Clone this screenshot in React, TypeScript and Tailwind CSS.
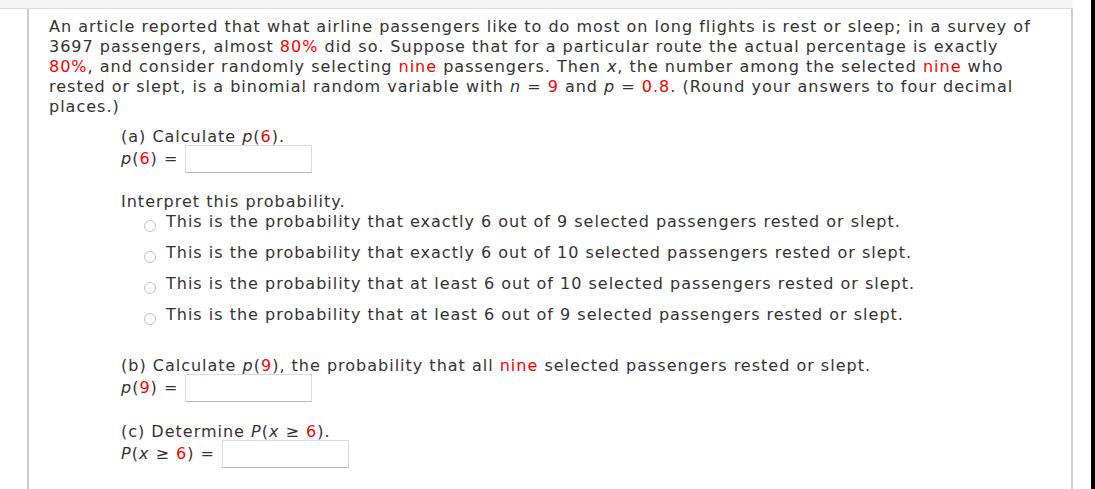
import React from 'react';

const Red: React.FC<{ children: React.ReactNode }> = ({ children }) => (
  <span className="text-[#ff0000]">{children}</span>
);

const V: React.FC<{ children: React.ReactNode }> = ({ children }) => <i>{children}</i>;

const AnswerBox: React.FC = () => (
  <input
    type="text"
    className="ml-[7px] h-[28px] w-[127px] border border-[#dcdcdc] border-b-[#b8b8b8] bg-white outline-none"
  />
);

const Radio: React.FC<{ label: string; first?: boolean }> = ({ label, first }) => (
  <label className={`flex items-center ${first ? '' : 'mt-[11px]'} leading-[20px]`}>
    <span className="mr-[10px] ml-[23px] mt-[8px] inline-block h-[12px] w-[12px] rounded-full border border-[#c4c4c4] bg-white" />
    <span>{label}</span>
  </label>
);

export default function App() {
  return (
    <div className="flex h-[489px] w-[1095px] bg-white text-[16px] leading-[20px] tracking-[1px] text-[#333333] [font-family:'DejaVu_Sans',Verdana,sans-serif]">
      <div className="flex w-[1073px] flex-col">
        <div className="h-[9px] border-b border-[#dddddd] bg-[#f5f5f5]" />
        <div className="ml-[27px] flex-1 border-x-2 border-[#cccccc] pl-[20px] pt-[8px]">
          <p className="whitespace-nowrap">
            An article reported that what airline passengers like to do most on long flights is rest or sleep; in a survey of
            <br />
            3697 passengers, almost <Red>80%</Red> did so. Suppose that for a particular route the actual percentage is exactly
            <br />
            <Red>80%</Red>, and consider randomly selecting <Red>nine</Red> passengers. Then <V>x</V>, the number among the selected <Red>nine</Red> who
            <br />
            rested or slept, is a binomial random variable with <V>n</V> = <Red>9</Red> and <V>p</V> = <Red>0.8</Red>. (Round your answers to four decimal
            <br />
            places.)
          </p>

          <div className="ml-[72px]">
            <div className="mt-[10px]">
              (a) Calculate <V>p</V>(<Red>6</Red>).
            </div>
            <div className="-mt-[2px] flex items-center">
              <span>
                <V>p</V>(<Red>6</Red>) =
              </span>
              <AnswerBox />
            </div>

            <div className="mt-[19px]">Interpret this probability.</div>
            <div>
              <Radio first label="This is the probability that exactly 6 out of 9 selected passengers rested or slept." />
              <Radio label="This is the probability that exactly 6 out of 10 selected passengers rested or slept." />
              <Radio label="This is the probability that at least 6 out of 10 selected passengers rested or slept." />
              <Radio label="This is the probability that at least 6 out of 9 selected passengers rested or slept." />
            </div>

            <div className="mt-[31px]">
              (b) Calculate <V>p</V>(<Red>9</Red>), the probability that all <Red>nine</Red> selected passengers rested or slept.
            </div>
            <div className="-mt-[2px] flex items-center">
              <span>
                <V>p</V>(<Red>9</Red>) =
              </span>
              <AnswerBox />
            </div>

            <div className="mt-[20px]">
              (c) Determine <V>P</V>(<V>x</V> ≥ <Red>6</Red>).
            </div>
            <div className="-mt-[2px] flex items-center">
              <span>
                <V>P</V>(<V>x</V> ≥ <Red>6</Red>) =
              </span>
              <AnswerBox />
            </div>
          </div>
        </div>
      </div>
      <div className="ml-auto w-[4px] bg-black" />
    </div>
  );
}
